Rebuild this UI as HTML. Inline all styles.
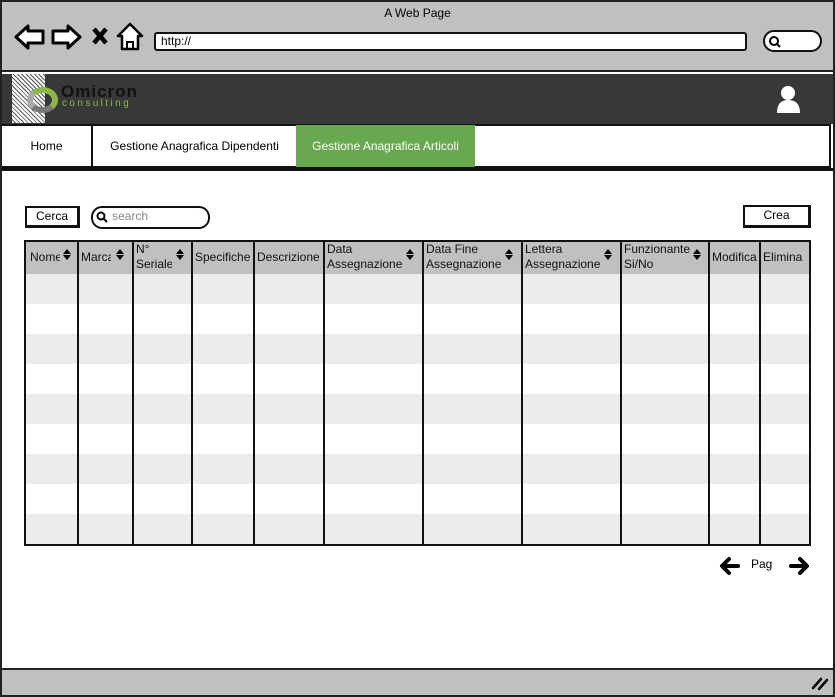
<!DOCTYPE html>
<html><head><meta charset="utf-8"><style>
*{margin:0;padding:0;box-sizing:border-box}
body{width:835px;height:697px;position:relative;background:#fff;font-family:"Liberation Sans",sans-serif;overflow:hidden;color:#000}
.a{position:absolute}
.th{position:absolute;top:242px;font-size:12px;line-height:15px;color:#111}
.s{position:absolute;top:249px;width:0;height:0}
.s:before{content:"";position:absolute;left:-4px;top:0;border-left:4px solid transparent;border-right:4px solid transparent;border-bottom:5px solid #000}
.s:after{content:"";position:absolute;left:-4px;top:6px;border-left:4px solid transparent;border-right:4px solid transparent;border-top:5px solid #000}
</style></head><body>
<div class="a" style="left:0;top:0;width:835px;height:697px;border:2px solid #222"></div>
<div class="a" style="left:2px;top:2px;width:831px;height:70px;background:#c0c0c0;border-bottom:2px solid #222"></div>
<div class="a" style="left:0;top:6px;width:835px;text-align:center;font-size:12px">A Web Page</div>
<svg class="a" style="left:14px;top:21px" width="132" height="32" viewBox="0 0 132 32">
<path d="M2 16 L14 5 L14 10 L29 10 L29 22 L14 22 L14 27 Z" fill="#fff" stroke="#000" stroke-width="3" stroke-linejoin="round"/>
<path d="M66 16 L54 5 L54 10 L39 10 L39 22 L54 22 L54 27 Z" fill="#fff" stroke="#000" stroke-width="3" stroke-linejoin="round"/>
<path d="M80 8 L92 22 M92 8 L80 22" stroke="#000" stroke-width="4.5"/>
<path d="M116 3 L104 15 L108 15 L108 28 L124 28 L124 15 L128 15 Z" fill="#fff" stroke="#000" stroke-width="2.5" stroke-linejoin="round"/>
<path d="M113 28 V21 H119 V28" fill="none" stroke="#000" stroke-width="2"/>
</svg>
<div class="a" style="left:154px;top:32px;width:593px;height:19px;background:#fff;border:2px solid #111;border-radius:3px;font-size:12px;padding-left:5px;line-height:15px">http://</div>
<div class="a" style="left:763px;top:30px;width:59px;height:22px;background:#fff;border:2px solid #111;border-radius:11px"></div>
<svg class="a" style="left:767px;top:35px" width="16" height="14"><circle cx="7" cy="6" r="4" fill="none" stroke="#000" stroke-width="2"/><path d="M10 9 L13 12" stroke="#000" stroke-width="2"/></svg>
<div class="a" style="left:2px;top:74px;width:831px;height:50px;background:#383838"></div>
<div class="a" style="left:12px;top:74px;width:33px;height:49px;background:repeating-linear-gradient(45deg,#fff 0 2px,#555 2px 3px)"></div>
<div class="a" style="left:27px;top:87px;width:31px;height:26px;border-radius:50%;border:6px solid #8ab848;border-left-color:#aaa;border-bottom-color:#777"></div>
<div class="a" style="left:61px;top:83px;font-size:17px;font-weight:bold;color:#111;letter-spacing:1px;line-height:17px">Omicron</div>
<div class="a" style="left:62px;top:99px;font-size:10px;color:#8ab848;letter-spacing:2.4px;line-height:10px">consulting</div>
<svg class="a" style="left:776px;top:84px" width="26" height="30"><circle cx="12" cy="9" r="7" fill="#fff"/><path d="M1 29 Q1 16 12 16 Q24 16 24 29 Z" fill="#fff"/></svg>
<div class="a" style="left:2px;top:124px;width:829px;height:44px;background:#fff;border:2px solid #111;border-left:0"></div>
<div class="a" style="left:91px;top:124px;width:2px;height:44px;background:#111"></div>
<div class="a" style="left:2px;top:139px;width:89px;text-align:center;font-size:12px">Home</div>
<div class="a" style="left:93px;top:139px;width:203px;text-align:center;font-size:12px">Gestione Anagrafica Dipendenti</div>
<div class="a" style="left:296px;top:125px;width:179px;height:42px;background:#6aa84f;color:#fff;font-size:12px;text-align:center;line-height:42px">Gestione Anagrafica Articoli</div>
<div class="a" style="left:2px;top:168px;width:831px;height:3px;background:#111"></div>
<div class="a" style="left:25px;top:206px;width:55px;height:22px;border:2px solid #111;border-right-width:3px;border-bottom-width:3px;font-size:12px;text-align:center;line-height:17px">Cerca</div>
<div class="a" style="left:91px;top:206px;width:119px;height:23px;border:2px solid #111;border-radius:11px"></div>
<svg class="a" style="left:96px;top:211px" width="12" height="13"><circle cx="5" cy="5" r="3.5" fill="none" stroke="#000" stroke-width="2"/><path d="M7.5 7.5 L11 11" stroke="#000" stroke-width="2"/></svg>
<div class="a" style="left:112px;top:209px;font-size:12px;color:#888">search</div>
<div class="a" style="left:743px;top:205px;width:68px;height:23px;border:2px solid #111;border-right-width:3px;border-bottom-width:3px;font-size:12px;text-align:center;line-height:17px">Crea</div>
<div class="a" style="left:24px;top:240px;width:787px;height:306px;border:2px solid #111;background:#fff"></div>
<div class="a" style="left:26px;top:242px;width:783px;height:32px;background:#c0c0c0"></div>
<div class="a" style="left:26px;top:274px;width:783px;height:30px;background:#ececec"></div>
<div class="a" style="left:26px;top:334px;width:783px;height:30px;background:#ececec"></div>
<div class="a" style="left:26px;top:394px;width:783px;height:30px;background:#ececec"></div>
<div class="a" style="left:26px;top:454px;width:783px;height:30px;background:#ececec"></div>
<div class="a" style="left:26px;top:514px;width:783px;height:30px;background:#ececec"></div>
<div class="a" style="left:77px;top:240px;width:2px;height:306px;background:#111"></div>
<div class="a" style="left:132px;top:240px;width:2px;height:306px;background:#111"></div>
<div class="a" style="left:191px;top:240px;width:2px;height:306px;background:#111"></div>
<div class="a" style="left:253px;top:240px;width:2px;height:306px;background:#111"></div>
<div class="a" style="left:323px;top:240px;width:2px;height:306px;background:#111"></div>
<div class="a" style="left:422px;top:240px;width:2px;height:306px;background:#111"></div>
<div class="a" style="left:521px;top:240px;width:2px;height:306px;background:#111"></div>
<div class="a" style="left:620px;top:240px;width:2px;height:306px;background:#111"></div>
<div class="a" style="left:708px;top:240px;width:2px;height:306px;background:#111"></div>
<div class="a" style="left:759px;top:240px;width:2px;height:306px;background:#111"></div>
<div class="th" style="left:30px;top:250px;width:30px;overflow:hidden;white-space:nowrap">Nome</div><div class="s" style="left:67px"></div>
<div class="th" style="left:81px;top:250px;width:30px;overflow:hidden;white-space:nowrap">Marca</div><div class="s" style="left:120px"></div>
<div class="th" style="left:136px;width:36px;overflow:hidden;white-space:nowrap">N°<br>Seriale</div><div class="s" style="left:180px"></div>
<div class="th" style="left:195px;top:250px;width:58px;overflow:hidden;white-space:nowrap">Specifiche</div>
<div class="th" style="left:257px;top:250px;width:66px;overflow:hidden;white-space:nowrap">Descrizione</div>
<div class="th" style="left:327px;width:78px;overflow:hidden;white-space:nowrap">Data<br>Assegnazione</div><div class="s" style="left:410px"></div>
<div class="th" style="left:426px;width:78px;overflow:hidden;white-space:nowrap">Data Fine<br>Assegnazione</div><div class="s" style="left:509px"></div>
<div class="th" style="left:525px;width:78px;overflow:hidden;white-space:nowrap">Lettera<br>Assegnazione</div><div class="s" style="left:608px"></div>
<div class="th" style="left:624px;width:66px;overflow:hidden;white-space:nowrap">Funzionante<br>Si/No</div><div class="s" style="left:697px"></div>
<div class="th" style="left:712px;top:250px;width:47px;overflow:hidden;white-space:nowrap">Modifica</div>
<div class="th" style="left:763px;top:250px;width:45px;overflow:hidden;white-space:nowrap">Elimina</div>
<svg class="a" style="left:718px;top:555px" width="94" height="24">
<path d="M20 11 H5 M11 4 L4 11 L11 18" fill="none" stroke="#000" stroke-width="4" stroke-linecap="round" stroke-linejoin="round"/>
<path d="M73 11 H88 M82 4 L89 11 L82 18" fill="none" stroke="#000" stroke-width="4" stroke-linecap="round" stroke-linejoin="round"/>
</svg>
<div class="a" style="left:751px;top:557px;font-size:12px">Pag</div>
<div class="a" style="left:2px;top:668px;width:831px;height:27px;background:#c0c0c0;border-top:2px solid #222"></div>
<svg class="a" style="left:810px;top:674px" width="20" height="18"><path d="M3 14 L11 5 M9 15 L17 6" stroke="#000" stroke-width="2.5" stroke-linecap="round"/></svg>
</body></html>
